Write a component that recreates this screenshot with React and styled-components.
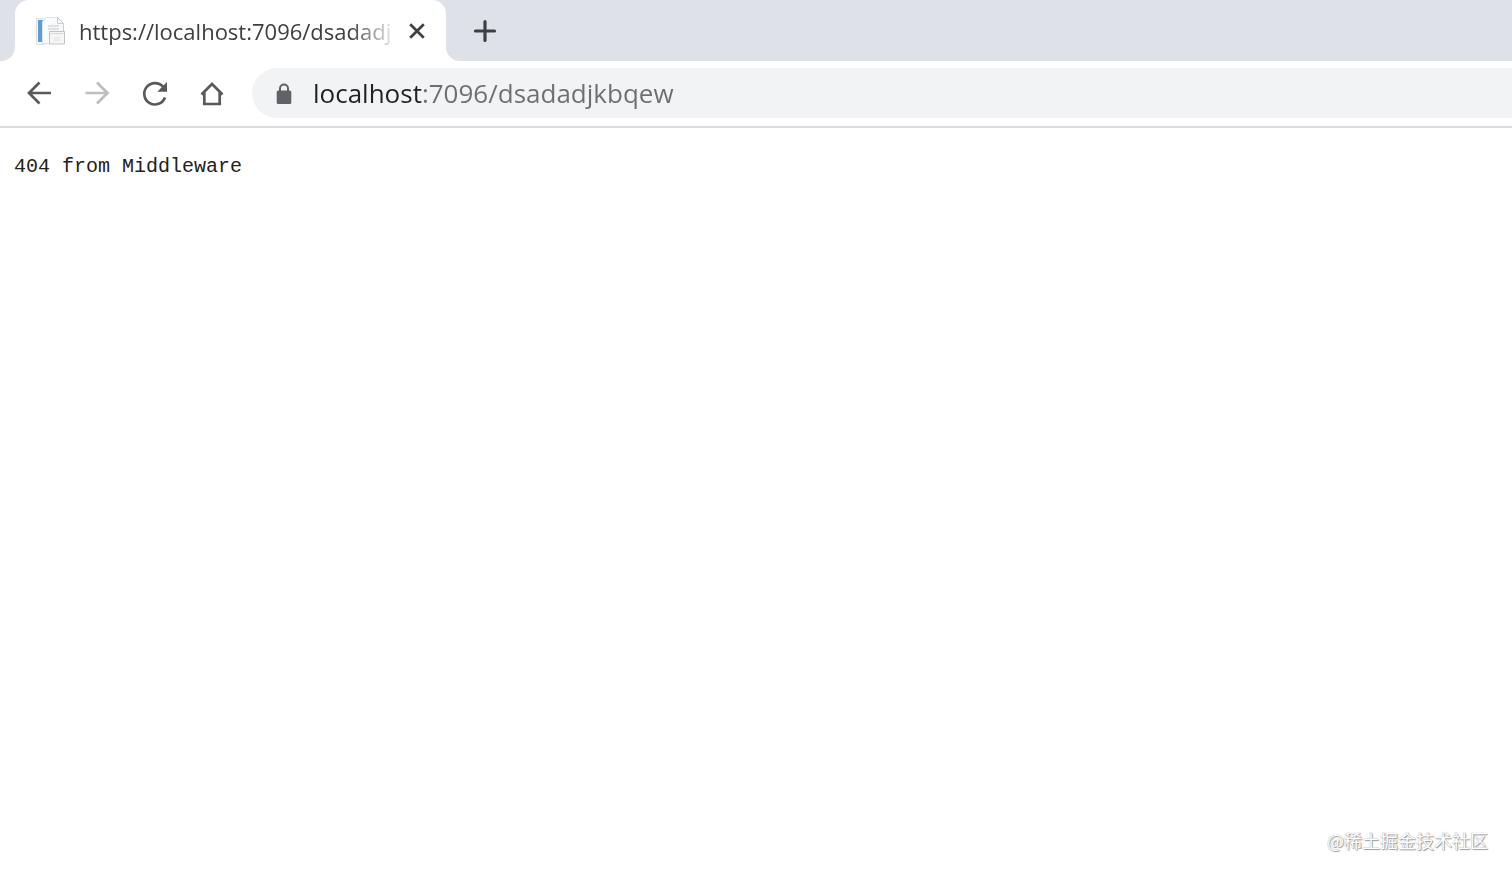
import React from "react";
import styled, { createGlobalStyle } from "styled-components";

const GlobalStyle = createGlobalStyle`
  * { box-sizing: border-box; }
  body {
    margin: 0;
    background: #fff;
    font-family: "Open Sans", "Noto Sans", sans-serif;
  }
`;

const Browser = styled.div`
  display: flex;
  flex-direction: column;
  min-height: 100vh;
`;

const TabStrip = styled.header`
  display: flex;
  height: 61px;
  background: linear-gradient(#dee1e8 50%, #fff 50%);
`;

const StripStart = styled.div`
  width: 15px;
  background: #dee1e8;
  border-bottom-right-radius: 14px;
`;

const StripEnd = styled.div`
  flex: 1;
  display: flex;
  align-items: center;
  padding-left: 20px;
  background: #dee1e8;
  border-bottom-left-radius: 14px;
`;

const Tab = styled.div`
  display: flex;
  align-items: center;
  width: 431px;
  padding: 0 10px 0 20px;
  background: #fff;
  border-radius: 14px 14px 0 0;
`;

const TabTitle = styled.span`
  flex: 1;
  margin-left: 12px;
  white-space: nowrap;
  font-size: 22px;
  line-height: 32px;
  color: #3c4043;
  mask-image: linear-gradient(to right, #000 85%, transparent);
`;

const IconButton = styled.button`
  display: flex;
  align-items: center;
  justify-content: center;
  width: ${(p) => p.$width}px;
  height: 38px;
  padding: 0;
  border: 0;
  background: none;
  color: ${(p) => p.$color || "#58595b"};
`;

const Toolbar = styled.nav`
  display: flex;
  align-items: center;
  height: 67px;
  padding: 0 0 2px 10px;
  border-bottom: 2px solid #dadcdf;
`;

const AddressBar = styled.label`
  flex: 1;
  display: flex;
  align-items: center;
  gap: 19px;
  height: 50px;
  margin-left: 10px;
  padding-left: 22px;
  background: #f1f3f4;
  border-radius: 25px 0 0 25px;
`;

const AddressInput = styled.input`
  flex: 1;
  min-width: 0;
  height: 40px;
  padding: 0;
  border: 0;
  outline: 0;
  font: 26px/40px "Open Sans", "Noto Sans", sans-serif;
  color: transparent;
  background: linear-gradient(to right, #202124 109px, #6b6f73 109px);
  background-clip: text;
  -webkit-background-clip: text;
`;

const Page = styled.main`
  flex: 1;
  display: flex;
  flex-direction: column;
  justify-content: space-between;
  padding: 24px 24px 22px 14px;
`;

const Message = styled.pre`
  margin: 0;
  font: 20px/30px "Liberation Mono", monospace;
  color: #222;
`;

const Watermark = styled.footer`
  align-self: flex-end;
  font: 18px/28px "Noto Sans CJK SC", sans-serif;
  color: #fff;
  text-shadow: 1px 1px 1px #999, 0 0 1px #888;
`;

function Icon({ size, children }) {
  return (
    <svg width={size} height={size} viewBox={`0 0 ${size} ${size}`} fill="none" stroke="currentColor" strokeWidth="2.7" aria-hidden="true">
      {children}
    </svg>
  );
}

function DocumentIcon() {
  return (
    <svg width="32" height="32" viewBox="0 0 32 32" aria-hidden="true">
      <path d="M1.500 3.500h8v26h-8z" fill="#f5f7f8" stroke="#dde0e2" />
      <path d="M3 5h5.500v22H3z" fill="#599fd1" />
      <path d="M7.500 28.500v-22l4-4h12v26z" fill="#fbfcfc" stroke="#dfe2e4" />
      <path d="M12.500 24V8.500l10-4V3.500l6 5V24z" fill="#f7f8f9" stroke="none" />
      <path d="M22.500 2.500v6H28.500v9M22.500 2.500l6 6" fill="none" stroke="#c8cdd0" />
      <path d="M13 11h11M13 14h11" stroke="#dde1e3" strokeWidth="2" />
      <path d="M14.500 16.500h15v12.500h-15z" fill="#f5f5f5" stroke="#bfc3c6" />
      <path d="M15.500 18.500h13" stroke="#d5d8da" />
      <path d="M19 22h6v4h-6z" fill="#e9ebec" />
    </svg>
  );
}

export default function App() {
  return (
    <Browser>
      <GlobalStyle />
      <TabStrip>
        <StripStart />
        <Tab>
          <DocumentIcon />
          <TabTitle>https://localhost:7096/dsadadj</TabTitle>
          <IconButton $width={38} $color="#3c4043" aria-label="Close tab">
            <Icon size={28}>
              <path d="M7.200 7.200l13.600 13.600M20.800 7.200L7.200 20.800" />
            </Icon>
          </IconButton>
        </Tab>
        <StripEnd>
          <IconButton $width={38} $color="#3c4043" aria-label="New tab">
            <Icon size={28}>
              <path d="M14 4.500v19M4.500 14h19" strokeWidth="3.200" strokeLinecap="round" />
            </Icon>
          </IconButton>
        </StripEnd>
      </TabStrip>
      <Toolbar>
        <IconButton $width={58} aria-label="Back">
          <Icon size={32}>
            <path d="M28 16H6M16.500 5.500L6 16l10.500 10.500" />
          </Icon>
        </IconButton>
        <IconButton $width={58} $color="#bcbec0" aria-label="Forward">
          <Icon size={32}>
            <path d="M4.500 16h22M16 5.500L26.500 16 16 26.500" />
          </Icon>
        </IconButton>
        <IconButton $width={58} aria-label="Reload">
          <Icon size={32}>
            <path d="M24 9.700A10.700 10.700 0 1 0 26 20.500" />
            <path d="M28 5v9.700h-9.700z" fill="currentColor" stroke="none" />
          </Icon>
        </IconButton>
        <IconButton $width={58} aria-label="Home">
          <Icon size={32}>
            <path d="M4.500 17.500L15 7l10.500 10.500M7.300 15.500V27h15.400V15.500" />
          </Icon>
        </IconButton>
        <AddressBar>
          <svg width="20" height="24" viewBox="0 0 20 24" aria-hidden="true">
            <path d="M6 10V7.500a4 4 0 0 1 8 0V10" fill="none" stroke="#5f6368" strokeWidth="2" />
            <rect x="2.700" y="9.500" width="14.600" height="13.500" rx="1.500" fill="#5f6368" />
          </svg>
          <AddressInput aria-label="Address" defaultValue="localhost:7096/dsadadjkbqew" spellCheck={false} />
        </AddressBar>
      </Toolbar>
      <Page>
        <Message>404 from Middleware</Message>
        <Watermark>@稀土掘金技术社区</Watermark>
      </Page>
    </Browser>
  );
}
